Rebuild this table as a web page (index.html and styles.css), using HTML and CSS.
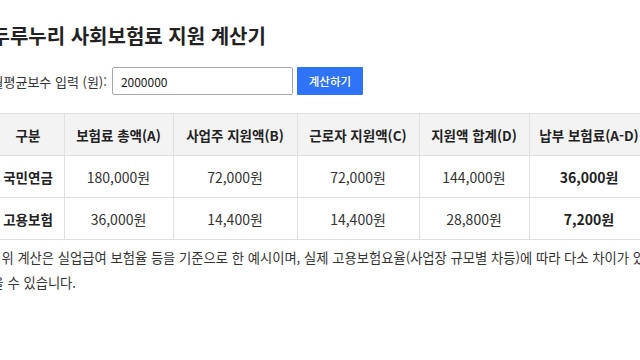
FILE: index.html
```html
<!DOCTYPE html>
<html lang="ko">
<head>
<meta charset="utf-8">
<title>두루누리 사회보험료 지원 계산기</title>
<link rel="stylesheet" href="styles.css">
</head>
<body>
<div class="page">
  <main class="calc">
    <h1 class="title">두루누리 사회보험료 지원 계산기</h1>
    <div class="form-row">
      <label class="label" for="pay">월평균보수 입력 (원):</label>
      <input class="input" id="pay" type="text" value="2000000">
      <button class="btn" type="button">계산하기</button>
    </div>
    <table class="table">
      <colgroup>
        <col class="c1"><col class="c2"><col class="c3"><col class="c4"><col class="c5"><col class="c6">
      </colgroup>
      <thead>
        <tr>
          <th>구분</th>
          <th>보험료 총액(A)</th>
          <th>사업주 지원액(B)</th>
          <th>근로자 지원액(C)</th>
          <th>지원액 합계(D)</th>
          <th>납부 보험료(A-D)</th>
        </tr>
      </thead>
      <tbody>
        <tr>
          <td class="name">국민연금</td>
          <td>180,000원</td>
          <td>72,000원</td>
          <td>72,000원</td>
          <td>144,000원</td>
          <td class="pay">36,000원</td>
        </tr>
        <tr>
          <td class="name">고용보험</td>
          <td>36,000원</td>
          <td>14,400원</td>
          <td>14,400원</td>
          <td>28,800원</td>
          <td class="pay">7,200원</td>
        </tr>
      </tbody>
    </table>
    <p class="note">* 위 계산은 실업급여 보험율 등을 기준으로 한 예시이며, 실제 고용보험요율(사업장 규모별 차등)에 따라 다소 차이가 있을 수 있습니다.</p>
  </main>
</div>
</body>
</html>
```
FILE: styles.css
```css
html, body {
  margin: 0;
  padding: 0;
  background: #fff;
}
body {
  font-family: "Noto Sans CJK KR", "Noto Sans", sans-serif;
  color: #333;
  overflow: hidden;
}
.page {
  display: flex;
  justify-content: center;
  width: 640px;
}
.calc {
  flex: 0 0 657px;
  width: 657px;
}
.title {
  margin: 23px 0 0;
  font-size: 20px;
  line-height: 26px;
  font-weight: 700;
  color: #222;
}
.form-row {
  display: flex;
  align-items: center;
  margin-top: 18px;
  height: 28px;
}
.label {
  font-size: 13px;
  color: #333;
  margin-right: 5px;
}
.input {
  box-sizing: border-box;
  width: 181px;
  height: 28px;
  border: 1px solid #a8a8a8;
  border-radius: 2px;
  padding: 0 8px;
  font-family: inherit;
  font-size: 12px;
  color: #222;
  margin-right: 4px;
}
.btn {
  box-sizing: border-box;
  width: 66px;
  height: 28px;
  border: none;
  border-radius: 1px;
  background: #2f74f6;
  color: #fff;
  font-family: inherit;
  font-size: 11.5px;
  font-weight: 500;
}
.table {
  margin-top: 18px;
  width: 657px;
  border-collapse: collapse;
  table-layout: fixed;
}
.c1 { width: 72px; }
.c2 { width: 109px; }
.c3 { width: 124px; }
.c4 { width: 122px; }
.c5 { width: 110px; }
.c6 { width: 120px; }
.table th, .table td {
  border: 1px solid #e0e0e0;
  text-align: center;
  height: 41px;
  padding: 0;
  white-space: nowrap;
}
.table th {
  background: #f3f3f3;
  font-size: 13.5px;
  font-weight: 700;
  color: #222;
}
.table td {
  font-size: 14px;
  color: #333;
}
.table td.name {
  font-size: 13.5px;
  font-weight: 700;
  color: #222;
}
.table td.pay {
  font-weight: 700;
  color: #222;
}
.note {
  margin: 5px 0 0;
  font-size: 13.3px;
  line-height: 25px;
  color: #333;
}
```
